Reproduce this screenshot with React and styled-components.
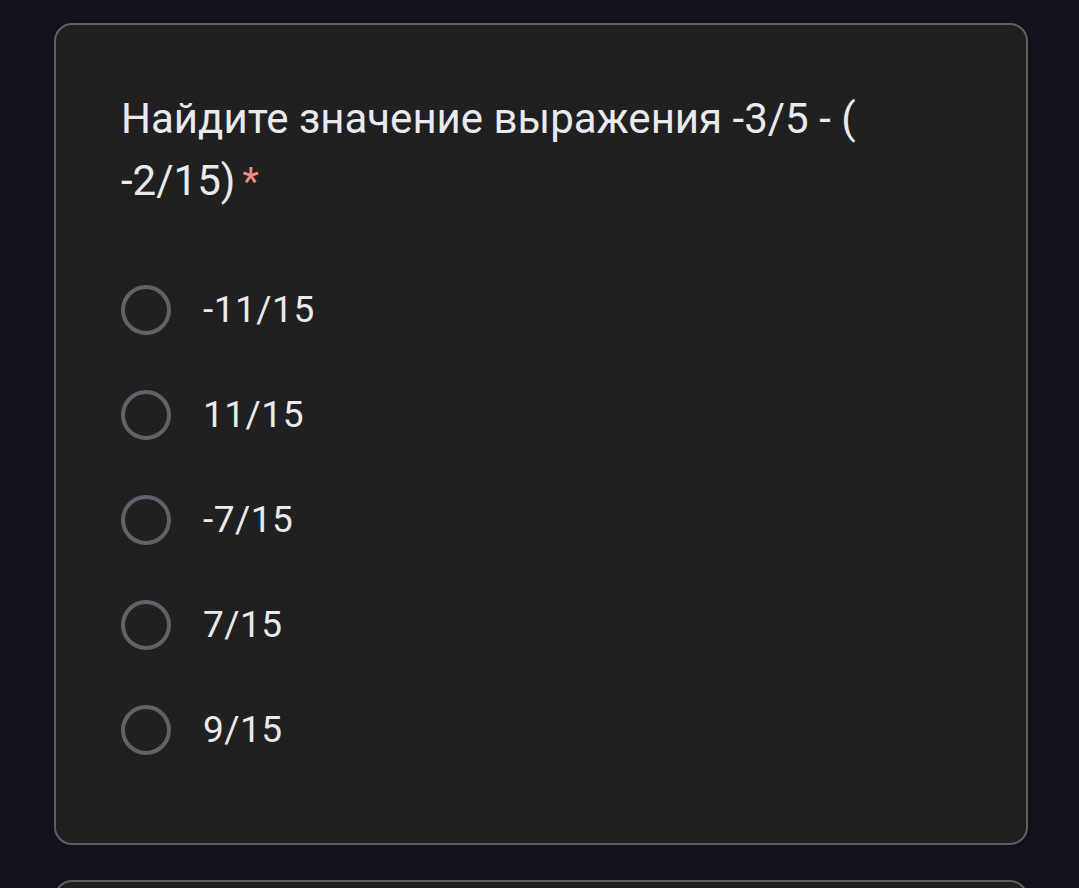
import React from "react";
import styled, { createGlobalStyle } from "styled-components";

const GlobalStyle = createGlobalStyle`
  html, body {
    margin: 0;
    padding: 0;
    background: #14111d;
  }
  body {
    font-family: Roboto, "Liberation Sans", sans-serif;
    overflow: hidden;
  }
`;

const Page = styled.div`
  display: flex;
  flex-direction: column;
  gap: 35px;
  padding: 23px 51px 0 54px;
  height: 888px;
  box-sizing: border-box;
  overflow: hidden;
`;

const Card = styled.div`
  box-sizing: border-box;
  flex-shrink: 0;
  height: ${(p) => p.$height}px;
  background: #202020;
  border: 2px solid #5f6064;
  border-radius: 18px;
  padding: 63px 64px 0 65px;
`;

const Title = styled.div`
  font-family: Roboto, "Liberation Sans", sans-serif;
  font-size: 42px;
  line-height: 62px;
  color: #e8eaed;
`;

const Star = styled.span`
  color: #f28b82;
  margin-left: 7px;
  font-size: 38px;
`;

const Options = styled.div`
  display: flex;
  flex-direction: column;
  margin-top: 44px;
`;

const Option = styled.label`
  display: flex;
  align-items: center;
  height: 105px;
  gap: 32px;
`;

const Radio = styled.span`
  box-sizing: border-box;
  width: 50px;
  height: 50px;
  border-radius: 50%;
  border: 4px solid #5f6368;
  flex-shrink: 0;
`;

const OptionText = styled.span`
  font-family: Roboto, "Liberation Sans", sans-serif;
  font-size: 37px;
  color: #e8eaed;
  letter-spacing: 0.5px;
`;

const answers = ["-11/15", "11/15", "-7/15", "7/15", "9/15"];

export default function App() {
  return (
    <>
      <GlobalStyle />
      <Page>
        <Card $height={822}>
          <Title>
            Найдите значение выражения -3/5 - ( -2/15)
            <Star>*</Star>
          </Title>
          <Options>
            {answers.map((a) => (
              <Option key={a}>
                <Radio />
                <OptionText>{a}</OptionText>
              </Option>
            ))}
          </Options>
        </Card>
        <Card $height={200} />
      </Page>
    </>
  );
}
